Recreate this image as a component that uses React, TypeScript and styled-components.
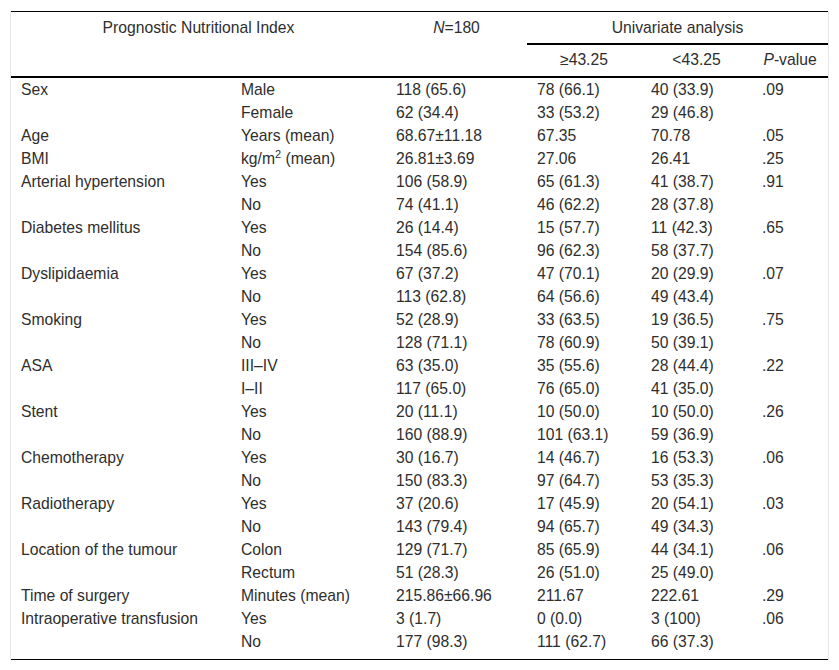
import React from "react";
import styled, { createGlobalStyle } from "styled-components";

type Row = [string, string, string, string, string, string];

// one entry per body line; the label and p-value only on the first line of a group
const rows: Row[] = [
  ["Sex", "Male", "118 (65.6)", "78 (66.1)", "40 (33.9)", ".09"],
  ["", "Female", "62 (34.4)", "33 (53.2)", "29 (46.8)", ""],
  ["Age", "Years (mean)", "68.67±11.18", "67.35", "70.78", ".05"],
  ["BMI", "kg/m2 (mean)", "26.81±3.69", "27.06", "26.41", ".25"],
  ["Arterial hypertension", "Yes", "106 (58.9)", "65 (61.3)", "41 (38.7)", ".91"],
  ["", "No", "74 (41.1)", "46 (62.2)", "28 (37.8)", ""],
  ["Diabetes mellitus", "Yes", "26 (14.4)", "15 (57.7)", "11 (42.3)", ".65"],
  ["", "No", "154 (85.6)", "96 (62.3)", "58 (37.7)", ""],
  ["Dyslipidaemia", "Yes", "67 (37.2)", "47 (70.1)", "20 (29.9)", ".07"],
  ["", "No", "113 (62.8)", "64 (56.6)", "49 (43.4)", ""],
  ["Smoking", "Yes", "52 (28.9)", "33 (63.5)", "19 (36.5)", ".75"],
  ["", "No", "128 (71.1)", "78 (60.9)", "50 (39.1)", ""],
  ["ASA", "III–IV", "63 (35.0)", "35 (55.6)", "28 (44.4)", ".22"],
  ["", "I–II", "117 (65.0)", "76 (65.0)", "41 (35.0)", ""],
  ["Stent", "Yes", "20 (11.1)", "10 (50.0)", "10 (50.0)", ".26"],
  ["", "No", "160 (88.9)", "101 (63.1)", "59 (36.9)", ""],
  ["Chemotherapy", "Yes", "30 (16.7)", "14 (46.7)", "16 (53.3)", ".06"],
  ["", "No", "150 (83.3)", "97 (64.7)", "53 (35.3)", ""],
  ["Radiotherapy", "Yes", "37 (20.6)", "17 (45.9)", "20 (54.1)", ".03"],
  ["", "No", "143 (79.4)", "94 (65.7)", "49 (34.3)", ""],
  ["Location of the tumour", "Colon", "129 (71.7)", "85 (65.9)", "44 (34.1)", ".06"],
  ["", "Rectum", "51 (28.3)", "26 (51.0)", "25 (49.0)", ""],
  ["Time of surgery", "Minutes (mean)", "215.86±66.96", "211.67", "222.61", ".29"],
  ["Intraoperative transfusion", "Yes", "3 (1.7)", "0 (0.0)", "3 (100)", ".06"],
  ["", "No", "177 (98.3)", "111 (62.7)", "66 (37.3)", ""],
];

const widths = [220, 155, 141, 114, 111, 76];

const renderText = (text: string) =>
  text === "kg/m2 (mean)" ? (
    <>
      kg/m<Sup>2</Sup> (mean)
    </>
  ) : (
    text
  );

const App = () => {
  return (
    <>
      <GlobalStyle />
      <Page>
        <Table>
          <colgroup>
            {widths.map((w, i) => (
              <col key={i} style={{ width: w }} />
            ))}
          </colgroup>
          <thead>
            <tr>
              <HeadCell colSpan={2}>Prognostic Nutritional Index</HeadCell>
              <HeadCell>
                <i>N</i>=180
              </HeadCell>
              <HeadCell colSpan={3} $rule>
                Univariate analysis
              </HeadCell>
            </tr>
            <tr>
              <SubHeadCell colSpan={3} />
              <SubHeadCell>≥43.25</SubHeadCell>
              <SubHeadCell>&lt;43.25</SubHeadCell>
              <SubHeadCell>
                <i>P</i>-value
              </SubHeadCell>
            </tr>
          </thead>
          <tbody>
            {rows.map((row, r) => (
              <BodyRow key={r} $last={r === rows.length - 1}>
                {row.map((cell, c) => (
                  <Cell key={c}>{renderText(cell)}</Cell>
                ))}
              </BodyRow>
            ))}
          </tbody>
        </Table>
      </Page>
    </>
  );
};

const GlobalStyle = createGlobalStyle`
  body {
    margin: 0;
    background: #fff;
  }
`;

const Page = styled.div`
  padding: 11px 0 0 10px;
`;

const Table = styled.table`
  width: 819px;
  table-layout: fixed;
  border-collapse: separate;
  border-spacing: 0;
  border-left: 1px solid #e6e6e6;
  border-right: 1px solid #e6e6e6;
  font-family: "Liberation Sans", Arial, sans-serif;
  font-size: 15.7px;
  color: #2e2e2e;
`;

const HeadCell = styled.th<{ $rule?: boolean }>`
  font-weight: normal;
  text-align: center;
  vertical-align: top;
  padding: 7px 10px 6px;
  line-height: 18px;
  border-top: 1px solid #000;
  border-bottom: ${(p) => (p.$rule ? "2px solid #000" : "2px solid transparent")};
`;

const SubHeadCell = styled.th`
  font-weight: normal;
  text-align: center;
  padding: 6px 10px 7px;
  line-height: 18px;
  border-bottom: 2px solid #000;
`;

const BodyRow = styled.tr<{ $last?: boolean }>`
  td {
    padding-bottom: ${(p) => (p.$last ? "6px" : "0")};
    border-bottom: ${(p) => (p.$last ? "1px solid #000" : "none")};
  }
`;

const Cell = styled.td`
  padding: 0 10px;
  height: 23px;
  line-height: 23px;
  white-space: nowrap;
  vertical-align: top;
`;

const Sup = styled.sup`
  font-size: 11px;
  line-height: 0;
  vertical-align: baseline;
  position: relative;
  top: -6px;
`;

export default App;
